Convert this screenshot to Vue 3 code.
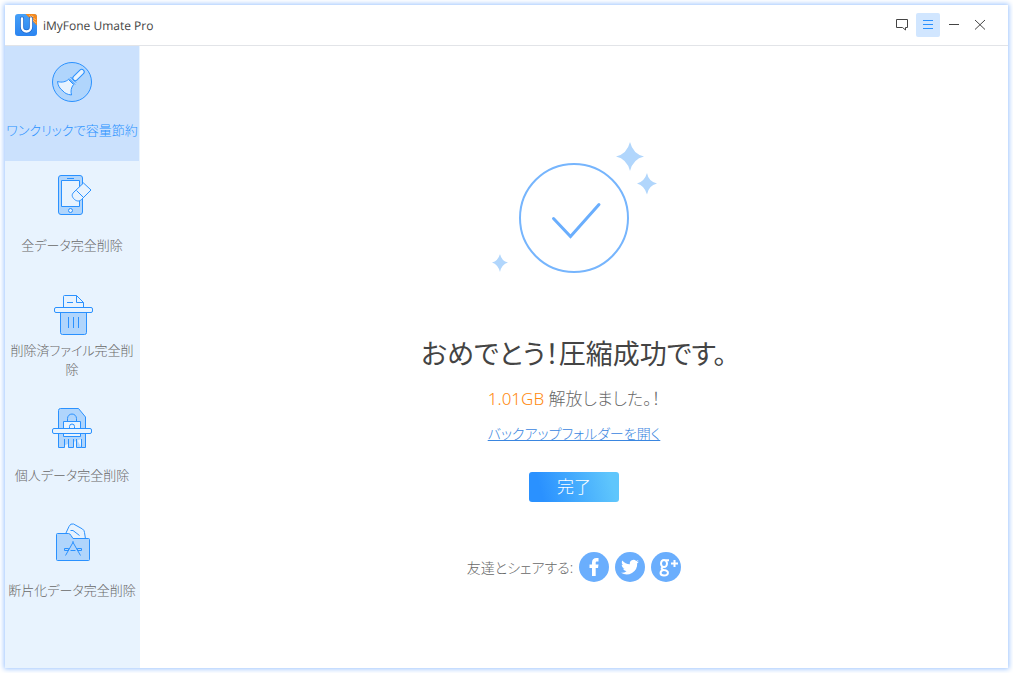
<script setup>
import { ref } from 'vue'

const items = [
  { id: 'clean', label: 'ワンクリックで容量節約' },
  { id: 'phone', label: '全データ完全削除' },
  { id: 'bin', label: '削除済ファイル完全削除' },
  { id: 'private', label: '個人データ完全削除' },
  { id: 'folder', label: '断片化データ完全削除' },
]
const active = ref('clean')
</script>

<template>
  <div class="window">
    <header class="titlebar">
      <svg class="logo" viewBox="0 0 22 22" aria-hidden="true">
        <defs>
          <linearGradient id="logoFill" x1="0" y1="0" x2="0" y2="1">
            <stop offset="0" stop-color="#46a0f8" />
            <stop offset="1" stop-color="#2b84f0" />
          </linearGradient>
          <clipPath id="logoClip"><rect width="22" height="22" rx="3" /></clipPath>
        </defs>
        <g clip-path="url(#logoClip)">
          <rect width="22" height="22" fill="url(#logoFill)" />
          <path d="M10.5 0H22V11.5Z" fill="#f58a1f" />
          <path d="M14.500 1.500l1.600 1.600M16.800 1.500l1.400 1.400M17 5l1.600 1.600M19 4.400l1.400 1.400M19.600 7.400l1.200 1.200" stroke="#ffd9ab" stroke-width="1" />
          <path d="M7 4.500V13a4.500 4.500 0 0 0 9 0V4.500" fill="none" stroke="#1f68cc" stroke-width="4" stroke-linecap="round" />
          <path d="M7 4.500V13a4.500 4.500 0 0 0 9 0V4.500" fill="none" stroke="#fff" stroke-width="2.400" stroke-linecap="round" />
        </g>
      </svg>
      <h1 class="app-name">iMyFone Umate Pro</h1>
      <div class="controls">
        <button type="button" aria-label="フィードバック">
          <svg viewBox="0 0 24 24"><path d="M6.500 6.500H17.500V14.500H15.500V17L12.500 14.500H6.500Z" /></svg>
        </button>
        <button type="button" class="menu" aria-label="メニュー">
          <svg viewBox="0 0 24 24"><path d="M7 7.500H17M7 11.500H17M7 15.500H17" /></svg>
        </button>
        <button type="button" aria-label="最小化">
          <svg viewBox="0 0 24 24"><path d="M7 11.500H17" /></svg>
        </button>
        <button type="button" aria-label="閉じる">
          <svg viewBox="0 0 24 24"><path d="M7 7L17 16.500M17 7L7 16.500" /></svg>
        </button>
      </div>
    </header>

    <div class="body">
      <nav class="sidebar">
        <button
          v-for="item in items"
          :key="item.id"
          type="button"
          class="nav-item"
          :class="{ active: item.id === active }"
          @click="active = item.id"
        >
          <svg class="nav-icon" viewBox="0 0 44 48" aria-hidden="true">
            <g v-if="item.id === 'clean'">
              <circle class="tint" cx="22" cy="23" r="19.5" />
              <rect class="pale" x="21.5" y="13.5" width="14" height="5" rx="2.5" transform="rotate(-45 28.5 16)" />
              <path d="M19 19.5L25 25.5M20.5 18L26 23.5" />
              <path class="pale" d="M7.5 22.5C12 24 16 22.500 18.500 20.500L23.500 25.500C21 29 20.500 32 21.500 36C17 35.500 14.500 34 13 32C9.500 29.500 8 26.500 7.500 22.500Z" />
            </g>
            <g v-else-if="item.id === 'phone'">
              <rect class="tint" x="8.500" y="1.500" width="24" height="39" rx="2.500" />
              <rect class="pale" x="11.500" y="6.500" width="18" height="26" />
              <path d="M17 4.500H24" />
              <circle class="pale" cx="20.500" cy="36.500" r="2" />
              <path class="pale" d="M33.500 9L41 16L31.500 25.500C29.500 27.500 27 27.500 24.500 25.500C21.500 22.500 21.500 20.500 24 18Z" />
              <path d="M26.500 16.500L33.500 23.500" />
            </g>
            <g v-else-if="item.id === 'bin'">
              <path class="pale" d="M13.500 18V7.500Q13.500 6.500 14.500 6.500H26.500L33.500 13.500V18" />
              <path d="M26.500 6.500V13.500H33.500M17 13.500H23" />
              <path class="tint" d="M10.500 23.500V43.500Q10.500 45.500 12.500 45.500H34.500Q36.500 45.500 36.500 43.500V23.500Z" />
              <rect class="pale" x="4.500" y="18.500" width="38" height="5" rx="1.500" />
              <path d="M18.500 28V39M23.500 28V39M28.500 28V39" />
            </g>
            <g v-else-if="item.id === 'private'">
              <path class="tint" d="M8.500 43.500V6.500Q8.500 4.500 10.500 4.500H28.500L35.500 13V43.500H31.500V35M31.500 43.500H26.500V35M23.500 35V43.500H18.500V35M14.500 35V43.500H8.500" />
              <path d="M17.500 17.500V14.500A4.500 4.500 0 0 1 26.500 14.500V17.500" />
              <rect class="pale" x="13.500" y="17.500" width="17" height="15" />
              <path d="M19.500 25V22.500A2.500 2.500 0 0 1 24.500 22.500V25" />
              <rect class="pale" x="2.500" y="24.500" width="39" height="5" rx="1.500" />
            </g>
            <g v-else>
              <path class="pale" d="M15.500 15L19 7.500Q20.500 4 23.500 5L32.500 10Q34.500 11.500 34.500 13.500L35.500 20H20Z" />
              <path d="M20.500 11.500H23L29.500 16.500" />
              <path class="tint" d="M6.500 40.500V15.500Q6.500 14.500 7.500 14.500H18.500Q20 14.500 21 16.500L23 19.500H38.500Q39.500 19.500 39.500 20.500V40.500Q39.500 41.500 38.500 41.500H7.500Q6.500 41.500 6.500 40.500Z" />
              <path d="M22.500 22.500L30.500 36.500M23.500 22.500L15.500 36.500M14.500 29.500H18.500V31.500H14.500ZM20.500 31.500H25.500M27.500 29.500H31.500V31.500H27.500Z" />
            </g>
          </svg>
          <span class="nav-label">{{ item.label }}</span>
        </button>
      </nav>

      <main class="content">
        <svg class="success" viewBox="0 0 180 140" aria-hidden="true">
          <circle cx="90" cy="78" r="54" fill="none" stroke="#76b5fd" stroke-width="2" />
          <path d="M69.500 78.500L86.500 96.500L115 64.500" fill="none" stroke="#6aaefd" stroke-width="3" stroke-linecap="round" />
          <g fill="#b1d6fc">
            <path d="M146 2Q149 14 160 16.500Q149 19 146 31Q143 19 132 16.500Q143 14 146 2Z" />
            <path d="M163 33Q164.500 41.500 173 43.500Q164.500 45.500 163 54.500Q160.500 45.500 153 43.500Q160.500 41.500 163 33Z" />
            <path d="M16 114Q17.500 121 24 122.500Q17.500 124.500 16 132Q14 124.500 8 122.500Q14 121 16 114Z" />
          </g>
        </svg>
        <h2>おめでとう！圧縮成功です。</h2>
        <p class="freed"><strong>1.01GB</strong> 解放しました。！</p>
        <a class="backup" href="#">バックアップフォルダーを開く</a>
        <button type="button" class="done">完了</button>
        <div class="share">
          <span>友達とシェアする:</span>
          <a href="#" aria-label="Facebook">
            <svg viewBox="0 0 30 30">
              <path d="M13 24V16H10.500V12.500H13V10.500C13 7.500 14.500 6 17.500 6H19.500V9.500H18C17 9.500 16.700 10 16.700 11V12.500H19.500L19 16H16.700V24Z" />
            </svg>
          </a>
          <a href="#" aria-label="Twitter">
            <svg viewBox="0 0 30 30">
              <path d="M24 9.400c-.7.300-1.400.5-2.100.6.800-.5 1.300-1.200 1.600-2-.7.400-1.500.7-2.300.9a3.700 3.700 0 0 0-6.300 3.400c-3.100-.2-5.800-1.600-7.600-3.900-1 1.700-.5 3.800 1.100 4.900-.6 0-1.200-.2-1.700-.5 0 1.800 1.300 3.300 3 3.700-.5.100-1.100.2-1.700.1.500 1.500 1.800 2.500 3.500 2.600A7.500 7.500 0 0 1 6 20.700a10.500 10.500 0 0 0 16.200-9.400c.7-.5 1.300-1.200 1.800-1.900z" />
            </svg>
          </a>
          <a href="#" aria-label="Google+">
            <svg viewBox="0 0 30 30">
              <g class="line">
                <ellipse cx="13" cy="11.500" rx="3" ry="3.500" />
                <path d="M14.500 8.200H18M12 15C9.500 16.500 10.500 17.500 13 18C18.500 18.800 18 23.500 13 23.500C8.500 23.500 8.500 19 12.500 18" />
              </g>
              <path class="plus" d="M20 11.500H27M23.500 8V15" />
            </svg>
          </a>
        </div>
      </main>
    </div>
  </div>
</template>

<style>
html,
body,
#app {
  height: 100%;
}
body {
  margin: 0;
  background: #fff;
}
#app {
  box-sizing: border-box;
  display: flex;
  padding: 5px;
}
</style>

<style scoped>
.window {
  flex: 1;
  display: flex;
  flex-direction: column;
  background: #fff;
  box-shadow: 0 0 5px 1px #9cc4ff;
  font-family: "Noto Sans", "Noto Sans CJK JP", sans-serif;
  color: #686868;
}
button {
  padding: 0;
  border: 0;
  background: none;
  font: inherit;
  color: inherit;
  cursor: pointer;
}
.titlebar {
  display: flex;
  align-items: center;
  height: 40px;
  padding: 0 16px 0 10px;
  border-bottom: 1px solid #e2e4e8;
}
.logo {
  width: 22px;
  height: 22px;
}
.app-name {
  flex: 1;
  margin: 0 0 0 6px;
  font-family: "Open Sans", "Noto Sans", sans-serif;
  font-size: 12px;
  font-weight: 400;
  color: #444;
  text-rendering: geometricPrecision;
}
.controls {
  display: flex;
  gap: 2px;
}
.controls button {
  width: 24px;
  height: 24px;
  border-radius: 2px;
}
.controls svg {
  display: block;
  fill: none;
  stroke: #444;
  stroke-width: 1;
}
.controls .menu {
  background: #d1e6ff;
}
.controls .menu svg {
  stroke: #2a91ff;
}
.body {
  flex: 1;
  display: flex;
}
.sidebar {
  width: 134px;
  flex: none;
  padding-right: 1px;
  background: #e8f3fe;
}
.nav-item {
  display: flex;
  flex-direction: column;
  align-items: center;
  gap: 3px;
  width: 100%;
  height: 115px;
  padding-top: 13px;
  font-family: "Noto Sans CJK JP", sans-serif;
  font-size: 13px;
  font-weight: 300;
  line-height: 19px;
  font-feature-settings: "palt";
}
.nav-item.active {
  background: #cbe1fd;
  color: #2a91ff;
}
.nav-icon {
  width: 44px;
  height: 48px;
  flex: none;
  fill: none;
  stroke: #2a91ff;
  stroke-width: 1;
  stroke-linejoin: round;
}
.tint {
  fill: #b0d5fc;
}
.pale {
  fill: #e8f3fe;
}
.nav-label {
  display: flex;
  align-items: center;
  justify-content: center;
  width: 132px;
  height: 38px;
}
.content {
  flex: 1;
  display: flex;
  flex-direction: column;
  align-items: center;
  padding-top: 94px;
  font-feature-settings: "palt";
}
.success {
  width: 180px;
  height: 140px;
}
h2 {
  margin: 53px 0 0;
  font-family: "Noto Sans CJK JP", sans-serif;
  font-size: 27px;
  font-weight: 400;
  line-height: 40px;
  color: #444;
}
.freed {
  margin: 14px 0 0;
  font-size: 17px;
  font-weight: 300;
  line-height: 24px;
}
.freed strong {
  font-weight: 300;
  color: #ff8a10;
}
.backup {
  margin-top: 12px;
  font-size: 14px;
  font-weight: 300;
  line-height: 22px;
  color: #3a86e0;
}
.done {
  width: 90px;
  height: 30px;
  margin-top: 27px;
  border-radius: 3px;
  background: linear-gradient(75deg, #2a91ff 15%, #5fc6fc 90%);
  font-size: 17px;
  font-weight: 300;
  line-height: 30px;
  color: #fff;
}
.share {
  display: flex;
  align-items: center;
  gap: 6px;
  margin-top: 50px;
  font-size: 14px;
  font-weight: 300;
}
.share a {
  width: 30px;
  height: 30px;
  border-radius: 50%;
  background: #6aaefd;
}
.share svg {
  display: block;
  fill: #fff;
}
.line {
  fill: none;
  stroke: #fff;
  stroke-width: 2;
}
.plus {
  fill: none;
  stroke: #fff;
  stroke-width: 2;
}
</style>
